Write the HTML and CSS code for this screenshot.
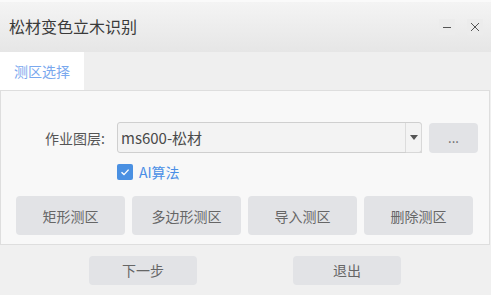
FILE: index.html
```html
<!DOCTYPE html>
<html lang="zh-CN">

<head>
    <meta charset="UTF-8">
    <title>松材变色立木识别</title>
    <link rel="stylesheet" href="styles.css">
</head>

<body>
    <div class="dialog">
        <div class="top-strip"></div>
        <div class="titlebar">
            <span class="title">松材变色立木识别</span>
            <div class="win-btns">
                <span class="win-btn">
                    <svg width="10" height="10" viewBox="0 0 10 10"><line x1="1" y1="5.5" x2="9" y2="5.5" stroke="#555" stroke-width="1"/></svg>
                </span>
                <span class="win-btn">
                    <svg width="10" height="10" viewBox="0 0 10 10"><path d="M1 1 L9 9 M9 1 L1 9" stroke="#555" stroke-width="1"/></svg>
                </span>
            </div>
        </div>

        <div class="tabs">
            <div class="tab active">测区选择</div>
        </div>

        <div class="panel">
            <div class="form-row">
                <label class="field-label" for="layer">作业图层:</label>
                <div class="select">
                    <span class="select-text">ms600-松材</span>
                    <span class="select-arrow">
                        <svg width="8" height="5" viewBox="0 0 8 5"><path d="M0 0 L8 0 L4 5 Z" fill="#555"/></svg>
                    </span>
                </div>
                <button class="btn btn-more">...</button>
            </div>
            <div class="check-row">
                <span class="checkbox">
                    <svg width="12" height="12" viewBox="0 0 12 12"><path d="M2.5 6.2 L5 8.6 L9.6 3.6" fill="none" stroke="#fff" stroke-width="1.4"/></svg>
                </span>
                <span class="check-label">AI算法</span>
            </div>
            <div class="btn-row">
                <button class="btn">矩形测区</button>
                <button class="btn">多边形测区</button>
                <button class="btn">导入测区</button>
                <button class="btn">删除测区</button>
            </div>
        </div>

        <div class="footer">
            <button class="btn btn-foot">下一步</button>
            <button class="btn btn-foot">退出</button>
        </div>
    </div>
</body>

</html>
```

FILE: styles.css
```css
html,
body {
    margin: 0;
    padding: 0;
}

body {
    width: 491px;
    height: 295px;
    overflow: hidden;
    font-family: "Noto Sans CJK SC", "Microsoft YaHei", sans-serif;
    background-color: #f0f0f0;
}

.top-strip {
    height: 2px;
    background-color: #fafafa;
}

.titlebar {
    height: 50px;
    display: flex;
    align-items: center;
    justify-content: space-between;
    padding: 0 8px 0 9px;
    background: linear-gradient(#f4f4f4, #e6e6e6);
}

.title {
    font-size: 16px;
    color: #3a3a3a;
    margin-top: -2px;
}

.win-btns {
    display: flex;
    gap: 12px;
    margin-top: -1px;
}

.win-btn {
    width: 16px;
    height: 16px;
    display: flex;
    align-items: center;
    justify-content: center;
    background-color: #ececec;
}

.tabs {
    height: 38px;
    display: flex;
    background-color: #efefef;
}

.tab {
    width: 84px;
    display: flex;
    align-items: center;
    justify-content: center;
    font-size: 14px;
    color: #7aa8ee;
}

.tab.active {
    background-color: #fff;
}

.panel {
    width: 490px;
    height: 155px;
    box-sizing: border-box;
    background-color: #f8f8f8;
    border: 1px solid #dedede;
    padding-top: 31px;
}

.form-row {
    display: flex;
    align-items: center;
    height: 31px;
}

.field-label {
    width: 104px;
    text-align: right;
    font-size: 14px;
    color: #555;
    margin-right: 12px;
}

.select {
    width: 305px;
    height: 31px;
    box-sizing: border-box;
    border: 1px solid #cfcfcf;
    border-radius: 3px;
    background-color: #f3f3f3;
    display: flex;
    align-items: center;
    justify-content: space-between;
}

.select-text {
    font-size: 15px;
    color: #4a4a4a;
    padding-left: 3px;
}

.select-arrow {
    width: 15px;
    height: 29px;
    border-left: 1px solid #dcdcdc;
    display: flex;
    align-items: center;
    justify-content: center;
    box-shadow: 1px 1px 0 #d8d8d8;
}

.btn {
    font-family: inherit;
    font-size: 14px;
    color: #666;
    background-color: #e2e3e6;
    border: none;
    border-radius: 4px;
    padding: 0;
    cursor: pointer;
}

.btn-more {
    width: 49px;
    height: 30px;
    margin-left: 7px;
    font-size: 13px;
}

.check-row {
    display: flex;
    align-items: center;
    margin: 10px 0 0 116px;
    height: 18px;
}

.checkbox {
    width: 16px;
    height: 16px;
    border-radius: 2px;
    background-color: #4a90e2;
    display: flex;
    align-items: center;
    justify-content: center;
}

.check-label {
    font-size: 14px;
    color: #4a8fe6;
    margin-left: 6px;
}

.btn-row {
    display: flex;
    gap: 7px;
    margin: 15px 0 0 15px;
}

.btn-row .btn {
    width: 109px;
    height: 39px;
}

.footer {
    display: flex;
    height: 50px;
    align-items: center;
    padding-left: 89px;
    gap: 96px;
}

.btn-foot {
    width: 108px;
    height: 29px;
}
```
